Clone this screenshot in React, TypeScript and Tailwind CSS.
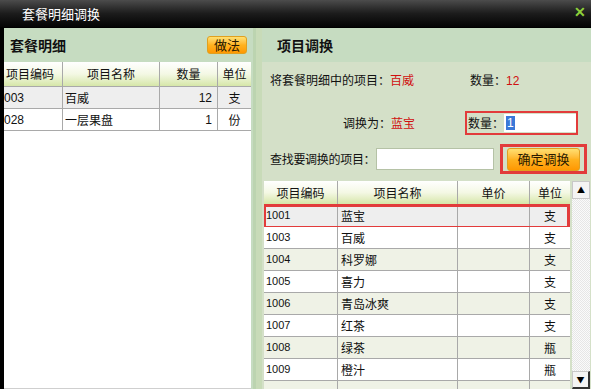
import React from "react";

interface LeftRow {
  code: string;
  name: string;
  qty: string;
  unit: string;
}

interface RightRow {
  code: string;
  name: string;
  unit: string;
}

const leftRows: LeftRow[] = [
  { code: "003", name: "百威", qty: "12", unit: "支" },
  { code: "028", name: "一层果盘", qty: "1", unit: "份" },
];

const rightRows: RightRow[] = [
  { code: "1001", name: "蓝宝", unit: "支" },
  { code: "1003", name: "百威", unit: "支" },
  { code: "1004", name: "科罗娜", unit: "支" },
  { code: "1005", name: "喜力", unit: "支" },
  { code: "1006", name: "青岛冰爽", unit: "支" },
  { code: "1007", name: "红茶", unit: "支" },
  { code: "1008", name: "绿茶", unit: "瓶" },
  { code: "1009", name: "橙汁", unit: "瓶" },
  { code: "", name: "", unit: "" },
];

const font = "font-['SimSun','Noto_Sans_CJK_SC',sans-serif]";

function OrangeButton({ label, className }: { label: string; className: string }) {
  return (
    <div
      className={`flex items-center justify-center rounded-[3px] border border-[#e0a020] bg-gradient-to-b from-[#ffe070] via-[#ffb21e] to-[#ff9800] text-[13px] text-[#2a1a00] ${className}`}
    >
      {label}
    </div>
  );
}

export default function App() {
  return (
    <div className={`w-[591px] h-[389px] overflow-hidden bg-black flex flex-col ${font}`}>
      {/* title bar */}
      <div className="h-[28px] shrink-0 flex items-center justify-between bg-gradient-to-b from-[#4c4c4c] via-[#1c1c1c] to-[#050505] border-b border-black">
        <span className="pl-[22px] text-[13px] text-white">套餐明细调换</span>
        <span className="pr-[5px] -mt-[4px] text-[14px] font-bold text-[#8fd13a]">✕</span>
      </div>

      <div className="flex flex-1 min-h-0">
        <div className="w-[4px] bg-black" />

        {/* left panel */}
        <div className="w-[249px] flex flex-col bg-[#c6dcc1]">
          <div className="h-[34px] shrink-0 flex items-center justify-between pl-[6px] pr-[6px]">
            <span className="text-[14px] font-bold text-[#111]">套餐明细</span>
            <OrangeButton label="做法" className="w-[40px] h-[18px] -mt-[1px]" />
          </div>
          <div className="flex-1 bg-white mr-[2px] border-b border-[#cfcfcf] text-[12px] text-[#111]">
            <div className="flex h-[25px] bg-gradient-to-b from-white via-[#f4f8e4] to-[#d6e6a8] border-b border-[#a9a9a9]">
              <div className="w-[59px] flex items-center pl-[2px] border-r border-[#a9a9a9]">项目编码</div>
              <div className="w-[97px] flex items-center justify-center border-r border-[#a9a9a9]">项目名称</div>
              <div className="w-[58px] flex items-center justify-center border-r border-[#a9a9a9]">数量</div>
              <div className="flex-1 flex items-center justify-center">单位</div>
            </div>
            {leftRows.map((r, i) => (
              <div
                key={r.code}
                className={`flex h-[22px] border-b border-[#a9a9a9] ${i === 0 ? "bg-[#eeeeee]" : "bg-white"}`}
              >
                <div className="w-[59px] flex items-center border-r border-[#a9a9a9] font-['Liberation_Sans',sans-serif] text-[12px]">{r.code}</div>
                <div className="w-[97px] flex items-center pl-[2px] border-r border-[#a9a9a9]">{r.name}</div>
                <div className="w-[58px] flex items-center justify-end pr-[5px] border-r border-[#a9a9a9] font-['Liberation_Sans',sans-serif]">{r.qty}</div>
                <div className="flex-1 flex items-center justify-center">{r.unit}</div>
              </div>
            ))}
          </div>
        </div>

        {/* divider */}
        <div className="w-[9px] flex">
          <div className="w-[3px] bg-[#bcd4b0]" />
          <div className="w-[6px] bg-[#c8dbb8]" />
        </div>

        {/* right panel */}
        <div className="flex-1 flex flex-col bg-[#d4e0c8] text-[12px] text-[#111]">
          <div className="h-[34px] shrink-0 flex items-center pl-[15px] bg-[#c6dcc1]">
            <span className="text-[14px] font-bold">项目调换</span>
          </div>

          <div className="flex items-center h-[24px] mt-[6px] pl-[8px]">
            <span className="w-[200px]">
              将套餐明细中的项目：<span className="text-[#d01010]">百威</span>
            </span>
            <span>
              数量：<span className="text-[#d01010] font-['Liberation_Sans',sans-serif]">12</span>
            </span>
          </div>

          <div className="flex items-center h-[25px] mt-[18px] pl-[81px]">
            <span className="w-[122px] whitespace-nowrap">
              调换为：<span className="text-[#d01010]">蓝宝</span>
            </span>
            <div className="flex items-center h-[24px] w-[113px] border-2 border-[#e23b3b] pl-[1px]">
              <span>数量：</span>
              <div className="flex-1 h-[18px] bg-white flex items-center pl-[2px]">
                <span className="bg-[#3a78d8] text-white leading-[14px] px-[1px] font-['Liberation_Sans',sans-serif]">1</span>
              </div>
            </div>
          </div>

          <div className="flex items-center h-[30px] mt-[9px] pl-[8px]">
            <span className="w-[106px] whitespace-nowrap tracking-[-0.3px]">查找要调换的项目：</span>
            <div className="w-[118px] h-[22px] bg-white border border-[#b5c2a6]" />
            <div className="ml-[6px] w-[87px] h-[30px] border-[3px] border-[#e23b3b] flex items-center justify-center">
              <OrangeButton label="确定调换" className="w-[73px] h-[23px]" />
            </div>
          </div>

          <div className="flex mt-[7px] ml-[2px] flex-1 min-h-0">
            <div className="w-[306px] bg-white overflow-hidden">
              <div className="flex h-[24px] bg-gradient-to-b from-white via-[#f4f8e4] to-[#d6e6a8] border-b border-[#a9a9a9]">
                <div className="w-[74px] flex items-center justify-center border-r border-[#a9a9a9]">项目编码</div>
                <div className="w-[120px] flex items-center justify-center border-r border-[#a9a9a9]">项目名称</div>
                <div className="w-[72px] flex items-center justify-center border-r border-[#a9a9a9]">单价</div>
                <div className="flex-1 flex items-center justify-center">单位</div>
              </div>
              {rightRows.map((r, i) => (
                <div
                  key={i}
                  className={`relative flex h-[22px] border-b border-[#a9a9a9] ${
                    i === 0 ? "bg-[#eeeeee]" : i % 2 === 0 ? "bg-[#eff2e6]" : "bg-white"
                  }`}
                >
                  <div className="w-[74px] flex items-center pl-[2px] border-r border-[#a9a9a9] font-['Liberation_Sans',sans-serif] text-[11px]">{r.code}</div>
                  <div className="w-[120px] flex items-center pl-[3px] border-r border-[#a9a9a9]">{r.name}</div>
                  <div className="w-[72px] border-r border-[#a9a9a9]" />
                  <div className="flex-1 flex items-center justify-center">{r.unit}</div>
                  {i === 0 && (
                    <div className="absolute -left-[1px] -top-[1px] w-[307px] h-[25px] border-[3px] border-[#e23b3b]" />
                  )}
                </div>
              ))}
            </div>
            {/* scrollbar */}
            <div className="w-[18px] ml-[2px] flex flex-col bg-[repeating-conic-gradient(#e6e6e6_0_25%,#fafafa_0_50%)] bg-[length:2px_2px]">
              <div className="h-[18px] bg-[#f4f4f4] border border-[#c8c8c8] flex items-center justify-center text-[8px] text-black">▲</div>
              <div className="flex-1" />
              <div className="h-[18px] bg-[#f4f4f4] border-l border-t border-[#c8c8c8] border-r-2 border-b-2 border-r-[#333] border-b-[#333] flex items-center justify-center text-[8px] text-black">▼</div>
            </div>
          </div>
        </div>
      </div>
    </div>
  );
}
